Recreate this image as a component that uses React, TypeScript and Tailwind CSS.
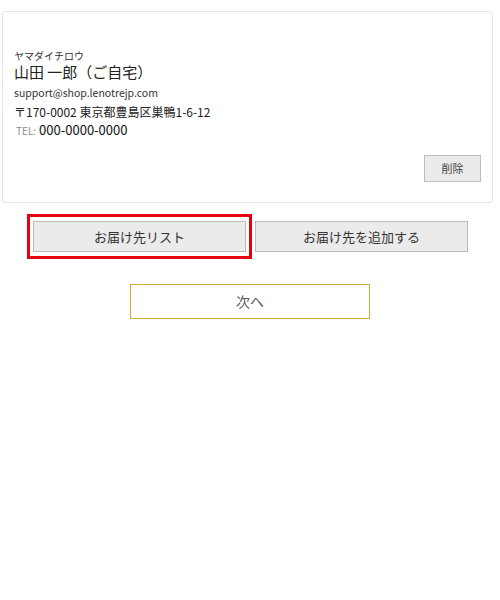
import React from 'react';

const font = { fontFamily: '"Noto Sans CJK JP", "Noto Sans", sans-serif' };

const AddressCard = () => {
  return (
    <div className="ml-[2px] mt-[11px] w-[491px] rounded-[3px] border border-[#e6e6e6] bg-white pt-[38px] pl-[11px] pr-[11px] pb-[20px]">
      <div className="mb-[1px] text-[10px] leading-[12px] text-[#333]">ヤマダイチロウ</div>
      <div className="text-[15px] leading-[18px] text-[#222]">山田 一郎（ご自宅）</div>
      <div className="mt-[4px] text-[10.5px] leading-[16px] text-[#333]">support@shop.lenotrejp.com</div>
      <div className="mt-[2px] text-[12px] leading-[18px] text-[#222]">〒170-0002 東京都豊島区巣鴨1-6-12</div>
      <div className="flex items-baseline pl-[2px] leading-[18px]">
        <span className="mr-[3px] text-[10px] text-[#888]">TEL:</span>
        <span className="text-[13px] text-[#111]">000-0000-0000</span>
      </div>
      <div className="mt-[15px] flex justify-end">
        <button className="h-[27px] w-[57px] border border-[#bdbdbd] bg-[#ebebeb] text-[11px] text-[#444]">
          削除
        </button>
      </div>
    </div>
  );
};

export default function App() {
  return (
    <div className="min-h-[600px] w-[500px] bg-white" style={font}>
      <AddressCard />

      <div className="ml-[27px] mt-[11px] flex items-center">
        <div className="border-[3px] border-[#e60012] px-[3px] py-[4px]">
          <button className="h-[31px] w-[213px] border border-[#bcbcbc] bg-[#ebebeb] text-[13px] text-[#333]">
            お届け先リスト
          </button>
        </div>
        <button className="ml-[3px] h-[31px] w-[213px] border border-[#bcbcbc] bg-[#ebebeb] text-[13px] text-[#333]">
          お届け先を追加する
        </button>
      </div>

      <div className="mt-[25px] flex justify-center">
        <button className="h-[35px] w-[240px] border border-[#d1ad34] bg-white text-[14px] text-[#555]">
          次へ
        </button>
      </div>
    </div>
  );
}
